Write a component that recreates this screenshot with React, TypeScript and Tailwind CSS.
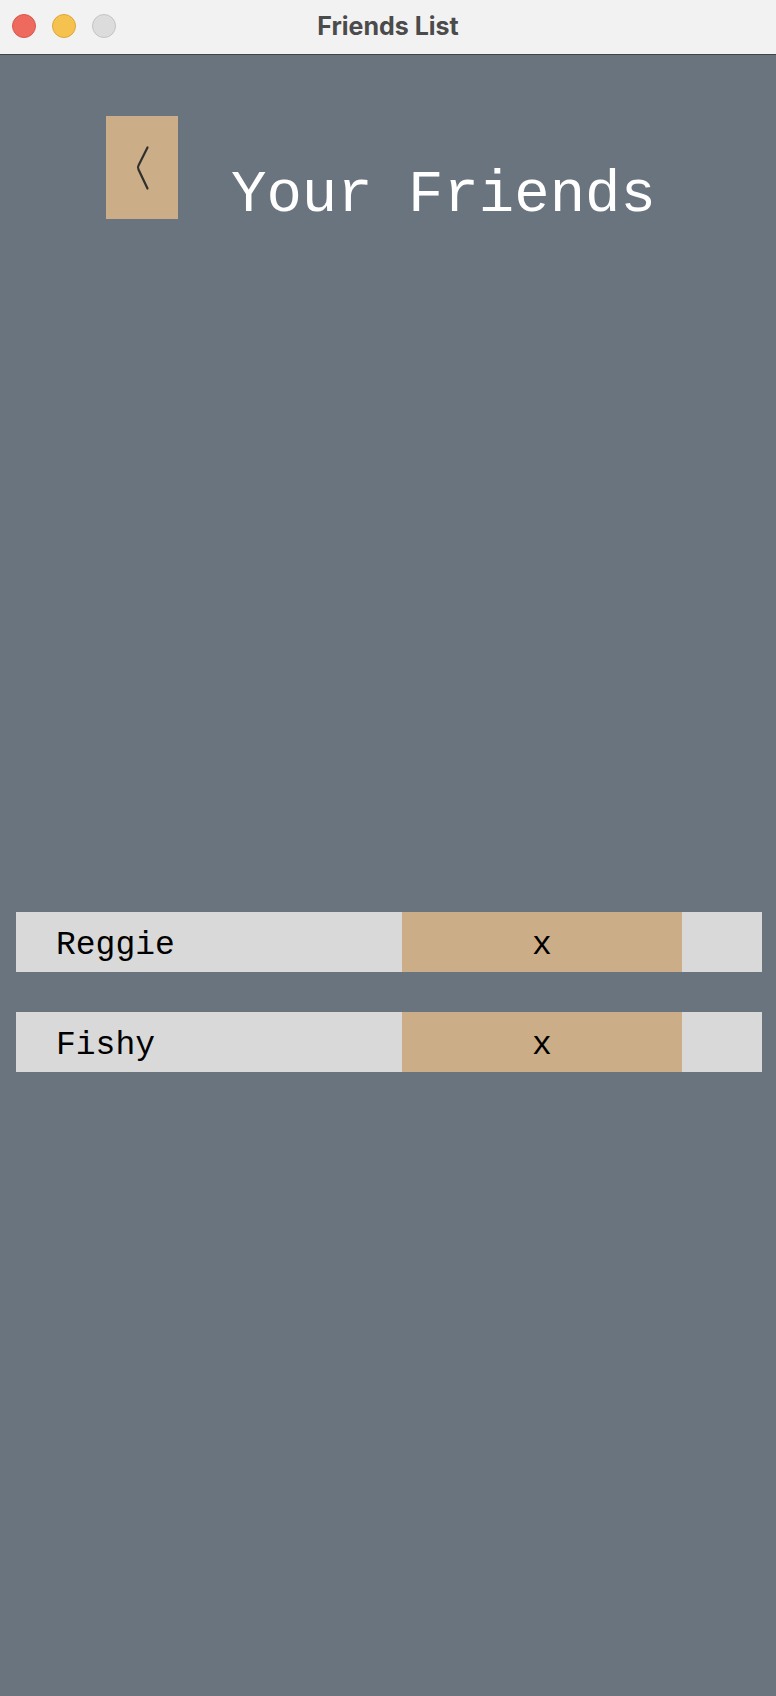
import React from "react";

const mono = { fontFamily: '"Liberation Mono", "Courier New", monospace' };

function FriendRow({ name }: { name: string }) {
  return (
    <div className="flex h-[60px] w-[746px] bg-[#d9d9d9]">
      <div className="flex w-[386px] items-center pl-[40px] pt-[7px] text-[33px] text-black" style={mono}>
        {name}
      </div>
      <div className="flex w-[280px] items-center justify-center bg-[#cbad87] pt-[7px] text-[33px] text-black" style={mono}>
        x
      </div>
      <div className="w-[80px]" />
    </div>
  );
}

export default function App() {
  return (
    <div className="min-h-[1696px] w-[776px] bg-[#6a747f]">
      <div className="relative flex h-[55px] items-center justify-center border-b border-[#3f454c] bg-[#f2f2f2]">
        <div className="absolute left-[12px] top-[14px] flex gap-[16px]">
          <div className="h-[24px] w-[24px] rounded-full border border-[#d9584d] bg-[#ee6a5f]" />
          <div className="h-[24px] w-[24px] rounded-full border border-[#dfa63b] bg-[#f6c24f]" />
          <div className="h-[24px] w-[24px] rounded-full border border-[#c4c4c4] bg-[#dcdcdc]" />
        </div>
        <span
          className="text-[25px] font-bold text-[#4b4b4b]"
          style={{ fontFamily: 'Inter, "Liberation Sans", sans-serif' }}
        >
          Friends List
        </span>
      </div>

      <div className="box-content flex h-[103px] items-start pl-[106px] pt-[61px]">
        <button className="flex h-[103px] w-[72px] items-center justify-center bg-[#cbad87]">
          <svg width="72" height="103" viewBox="0 0 72 103">
            <path
              d="M41.5 31.5 L32.5 49.5 Q31.3 51.3 32.5 53.5 L41.5 72.5"
              fill="none"
              stroke="#2f2f2f"
              strokeWidth="2.2"
              strokeLinecap="round"
            />
          </svg>
        </button>
        <h1 className="ml-[53px] mt-[50px] text-[59px] leading-none text-white" style={mono}>
          Your Friends
        </h1>
      </div>

      <div className="ml-[16px] mt-[693px] flex flex-col gap-[40px]">
        <FriendRow name="Reggie" />
        <FriendRow name="Fishy" />
      </div>
    </div>
  );
}
